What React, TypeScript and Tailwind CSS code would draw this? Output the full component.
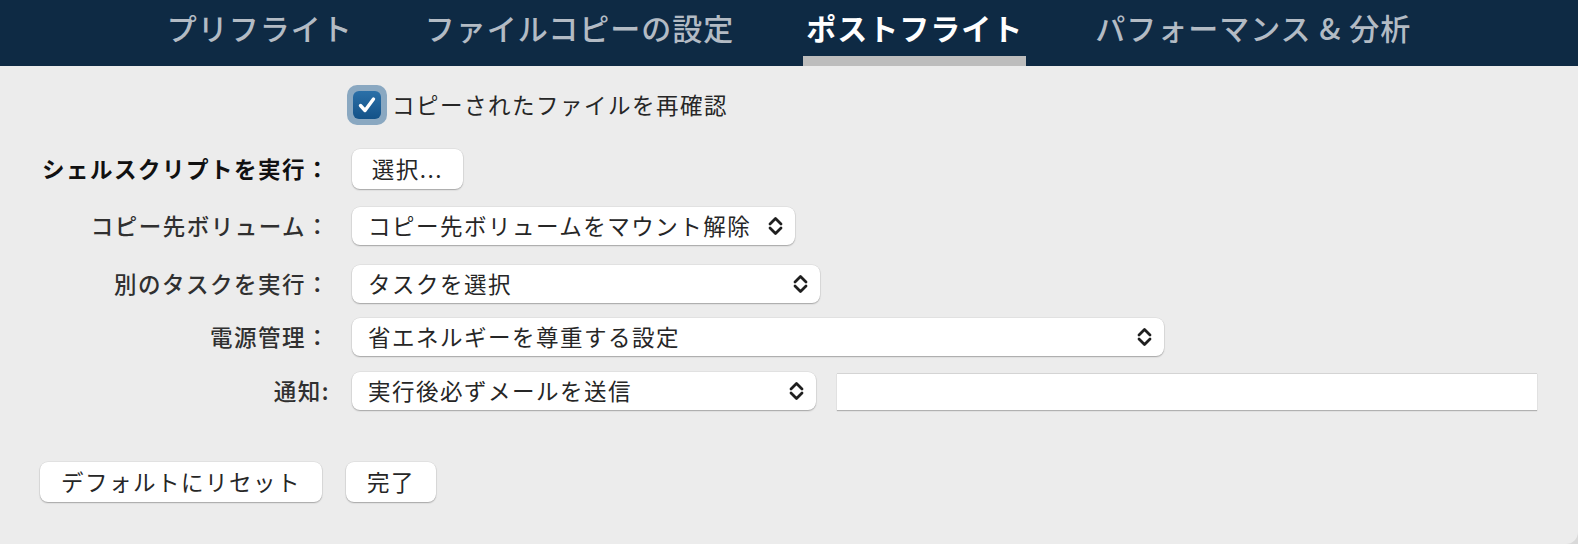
import type { ReactNode } from "react";

const TABS = [
  { label: "プリフライト", active: false },
  { label: "ファイルコピーの設定", active: false },
  { label: "ポストフライト", active: true },
  { label: "パフォーマンス & 分析", active: false },
];

function Chevrons() {
  return (
    <svg width="17" height="22" viewBox="0 0 17 22" fill="none" className="shrink-0">
      <path
        d="M3 9 L8.5 3.5 L14 9"
        stroke="#1f1f1f"
        strokeWidth="2.8"
        strokeLinecap="round"
        strokeLinejoin="round"
      />
      <path
        d="M3 13 L8.5 18.5 L14 13"
        stroke="#1f1f1f"
        strokeWidth="2.8"
        strokeLinecap="round"
        strokeLinejoin="round"
      />
    </svg>
  );
}

function Select({ value, width }: { value: string; width: string }) {
  return (
    <div
      className={`flex h-[38px] ${width} items-center justify-between rounded-[8px] bg-white pl-[16px] pr-[11px] text-[#262626] shadow-[0_0_0_0.5px_rgba(0,0,0,0.08),0_1px_1.5px_rgba(0,0,0,0.28)]`}
    >
      <span className="whitespace-nowrap">{value}</span>
      <Chevrons />
    </div>
  );
}

function Button({ children, width }: { children: ReactNode; width: string }) {
  return (
    <button
      className={`flex h-[40px] ${width} items-center justify-center rounded-[8px] bg-white text-[#262626] shadow-[0_0_0_0.5px_rgba(0,0,0,0.08),0_1px_1.5px_rgba(0,0,0,0.28)]`}
    >
      {children}
    </button>
  );
}

function Row({ label, bold, children, className }: { label: string; bold?: boolean; children: ReactNode; className: string }) {
  return (
    <div className={`flex items-center ${className}`}>
      <div
        className={`w-[352px] shrink-0 whitespace-nowrap pr-[22px] text-right ${
          bold ? "font-bold text-[#111]" : "font-medium text-[#303030]"
        }`}
      >
        {label}
      </div>
      {children}
    </div>
  );
}

export default function App() {
  return (
    <div
      className="h-[544px] w-[1578px] overflow-hidden bg-[#d9d9d9] text-[22.5px] tracking-[1.5px]"
      style={{ fontFamily: '"Noto Sans CJK JP", "Noto Sans", sans-serif' }}
    >
      <div className="flex h-full flex-col rounded-br-[12px] bg-[#ececec]">
        {/* Tabs */}
        <div className="flex h-[66px] shrink-0 justify-center gap-[66px] bg-[#0e2a44]">
          {TABS.map((t) => (
            <div key={t.label} className="flex h-full flex-col">
              <div
                className={`px-[3px] pt-[8px] text-[30px] leading-[38px] tracking-[1px] whitespace-nowrap ${
                  t.active ? "font-bold text-white" : "font-medium text-[#b3bbc4]"
                }`}
              >
                {t.label}
              </div>
              <div className={`mt-auto h-[10px] ${t.active ? "bg-[#bdbdbd]" : ""}`} />
            </div>
          ))}
        </div>

        {/* Form */}
        <div className="flex flex-col">
          <div className="mt-[19px] flex items-center pl-[347px]">
            <div className="flex h-[40px] w-[40px] items-center justify-center rounded-[10px] bg-[#8aa8c1]">
              <div className="flex h-[28px] w-[28px] items-center justify-center rounded-[6px] bg-gradient-to-b from-[#2b70a8] to-[#135288]">
                <svg width="28" height="28" viewBox="0 0 28 28" fill="none">
                  <path
                    d="M7.5 14.5 L12 19.5 L20.5 8"
                    stroke="white"
                    strokeWidth="3.4"
                    strokeLinecap="round"
                    strokeLinejoin="round"
                  />
                </svg>
              </div>
            </div>
            <span className="ml-[5px] text-[#262626]">コピーされたファイルを再確認</span>
          </div>

          <Row label="シェルスクリプトを実行：" bold className="mt-[24px]">
            <Button width="w-[111px]">選択...</Button>
          </Row>
          <Row label="コピー先ボリューム：" className="mt-[18px]">
            <Select value="コピー先ボリュームをマウント解除" width="w-[443px]" />
          </Row>
          <Row label="別のタスクを実行：" className="mt-[20px]">
            <Select value="タスクを選択" width="w-[468px]" />
          </Row>
          <Row label="電源管理：" className="mt-[15px]">
            <Select value="省エネルギーを尊重する設定" width="w-[812px]" />
          </Row>
          <Row label="通知:" className="mt-[16px]">
            <Select value="実行後必ずメールを送信" width="w-[464px]" />
            <div className="ml-[21px] h-[37px] w-[700px] border-t border-[#d4d4d4] bg-white shadow-[0_1px_1px_rgba(0,0,0,0.25)]" />
          </Row>

          <div className="mt-[52px] flex gap-[24px] pl-[40px]">
            <Button width="w-[282px]">デフォルトにリセット</Button>
            <Button width="w-[90px]">完了</Button>
          </div>
        </div>
      </div>
    </div>
  );
}
